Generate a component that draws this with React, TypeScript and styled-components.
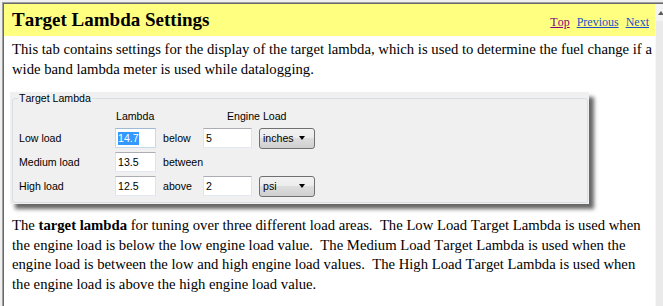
import styled, { createGlobalStyle } from 'styled-components';

const GlobalStyle = createGlobalStyle`
  html, body {
    margin: 0;
    padding: 0;
    background: #f0f0f0;
  }
  body {
    overflow: hidden;
  }
`;

const Window = styled.div`
  display: flex;
  height: calc(100vh - 2px);
  margin: 2px 0 0 2px;
  box-sizing: border-box;
  border-top: 1px solid #a0a0a0;
  border-left: 1px solid #a0a0a0;
`;

const Frame = styled.div`
  flex: 1;
  display: flex;
  background: #fff;
  border-top: 1px solid #696969;
  border-left: 1px solid #696969;
`;

const Content = styled.div`
  flex: 1;
  min-width: 0;
  color: #000;
  font-family: 'Liberation Serif', 'Times New Roman', serif;
  font-size: 14.7px;
  line-height: 19.5px;
  font-kerning: none;
`;

const ScrollBar = styled.div`
  width: 7px;
  background: #eaeaea;
  border-left: 1px solid #f7f7f7;
`;

const ScrollButton = styled.div`
  display: flex;
  align-items: center;
  height: 17px;
  padding-left: 2px;
  background: #f4f4f4;
`;

const UpArrow = styled.span`
  width: 0;
  height: 0;
  border-left: 3px solid transparent;
  border-right: 3px solid transparent;
  border-bottom: 4px solid #5a5a5a;
`;

const TitleBar = styled.header`
  display: flex;
  align-items: baseline;
  justify-content: space-between;
  height: 32px;
  padding: 0 6px 0 8px;
  background: #ffff80;
`;

const Title = styled.h1`
  margin: 0;
  font-size: 19px;
  font-weight: bold;
  line-height: 32px;
`;

const NavLinks = styled.nav`
  display: flex;
  gap: 7px;
  font-size: 12px;
`;

const NavLink = styled.a<{ $visited?: boolean }>`
  color: ${(p) => (p.$visited ? '#800080' : '#1c4fc9')};
  text-decoration: underline;
`;

const Paragraph = styled.p<{ $gap: number }>`
  margin: ${(p) => p.$gap}px 0 0;
  padding-left: 8px;
`;

const Panel = styled.div`
  width: 579px;
  height: 112px;
  margin: 13px 0 0 6px;
  padding: 0 1px 1px 2px;
  box-sizing: border-box;
  background: #f0f0f0;
  box-shadow: 5px 5px 4px rgba(0, 0, 0, 0.6);
  font-family: 'Liberation Sans', Arial, sans-serif;
  font-size: 10.6px;
  line-height: normal;
`;

const GroupBox = styled.fieldset`
  height: 100%;
  min-width: 0;
  margin: 0;
  padding: 0 0 0 6px;
  box-sizing: border-box;
  border: 1px solid #d5dfe5;
  border-radius: 3px;
`;

const GroupTitle = styled.legend`
  margin-left: -1px;
  padding: 0 1px;
  line-height: 13px;
`;

const FieldGrid = styled.div`
  display: grid;
  grid-template-columns: 96px 48px 40px 56px 56px;
  grid-template-rows: 17px 20px 20px 20px;
  row-gap: 4px;
  margin-top: 2px;
  align-items: center;
`;

const ColumnHead = styled.div<{ $indent: number; $span?: number }>`
  grid-column: ${(p) => (p.$span ? `span ${p.$span}` : 'auto')};
  padding-left: ${(p) => p.$indent}px;
  white-space: nowrap;
`;

const RowLabel = styled.div`
  grid-column: 1;
  white-space: nowrap;
`;

const Word = styled.div`
  white-space: nowrap;
`;

const TextBox = styled.div<{ $width: number; $focused?: boolean }>`
  display: flex;
  align-items: center;
  width: ${(p) => p.$width}px;
  height: 20px;
  padding: 0 2px;
  box-sizing: border-box;
  background: #fff;
  border: 1px solid;
  border-color: ${(p) =>
    p.$focused
      ? '#9fb8d6 #c5daed #c5daed #c5daed'
      : '#abadb3 #e2e3ea #e3e9ef #e2e3ea'};
`;

const Selection = styled.span`
  background: #3399ff;
  color: #fff;
  line-height: 13px;
`;

const Dropdown = styled.div`
  display: flex;
  align-items: center;
  justify-content: space-between;
  width: 56px;
  height: 21px;
  padding: 0 9px 0 3px;
  box-sizing: border-box;
  border: 1px solid #707070;
  border-radius: 3px;
  background: linear-gradient(#f2f2f2 0%, #ebebeb 50%, #dddddd 50%, #cfcfcf 100%);
`;

const Caret = styled.span`
  width: 0;
  height: 0;
  border-left: 3.5px solid transparent;
  border-right: 3.5px solid transparent;
  border-top: 4px solid #000;
`;

const Spacer = styled.div``;

export default function App() {
  return (
    <>
      <GlobalStyle />
      <Window>
        <Frame>
          <Content>
            <TitleBar>
              <Title>Target Lambda Settings</Title>
              <NavLinks>
                <NavLink href="#" $visited>
                  Top
                </NavLink>
                <NavLink href="#">Previous</NavLink>
                <NavLink href="#">Next</NavLink>
              </NavLinks>
            </TitleBar>

            <Paragraph $gap={4}>
              This tab contains settings for the display of the target lambda, which is used to
              determine the fuel change if a wide band lambda meter is used while datalogging.
            </Paragraph>

            <Panel>
              <GroupBox>
                <GroupTitle>Target Lambda</GroupTitle>
                <FieldGrid>
                  <Spacer />
                  <ColumnHead $indent={1}>Lambda</ColumnHead>
                  <Spacer />
                  <ColumnHead $indent={24} $span={2}>
                    Engine Load
                  </ColumnHead>

                  <RowLabel>Low load</RowLabel>
                  <TextBox $width={41} $focused>
                    <Selection>14.7</Selection>
                  </TextBox>
                  <Word>below</Word>
                  <TextBox $width={49}>5</TextBox>
                  <Dropdown>
                    inches
                    <Caret />
                  </Dropdown>

                  <RowLabel>Medium load</RowLabel>
                  <TextBox $width={41}>13.5</TextBox>
                  <Word>between</Word>

                  <RowLabel>High load</RowLabel>
                  <TextBox $width={41}>12.5</TextBox>
                  <Word>above</Word>
                  <TextBox $width={49}>2</TextBox>
                  <Dropdown>
                    psi
                    <Caret />
                  </Dropdown>
                </FieldGrid>
              </GroupBox>
            </Panel>

            <Paragraph $gap={12}>
              The <b>target lambda</b> for tuning over three different load areas.{'\u00a0 '}The
              Low Load Target Lambda is used when the engine load is below the low engine load
              value.{'\u00a0 '}The Medium Load Target Lambda is used when the engine load is
              between the low and high engine load values.{'\u00a0 '}The High Load Target Lambda is
              used when the engine load is above the high engine load value.
            </Paragraph>
          </Content>
          <ScrollBar>
            <ScrollButton>
              <UpArrow />
            </ScrollButton>
          </ScrollBar>
        </Frame>
      </Window>
    </>
  );
}
